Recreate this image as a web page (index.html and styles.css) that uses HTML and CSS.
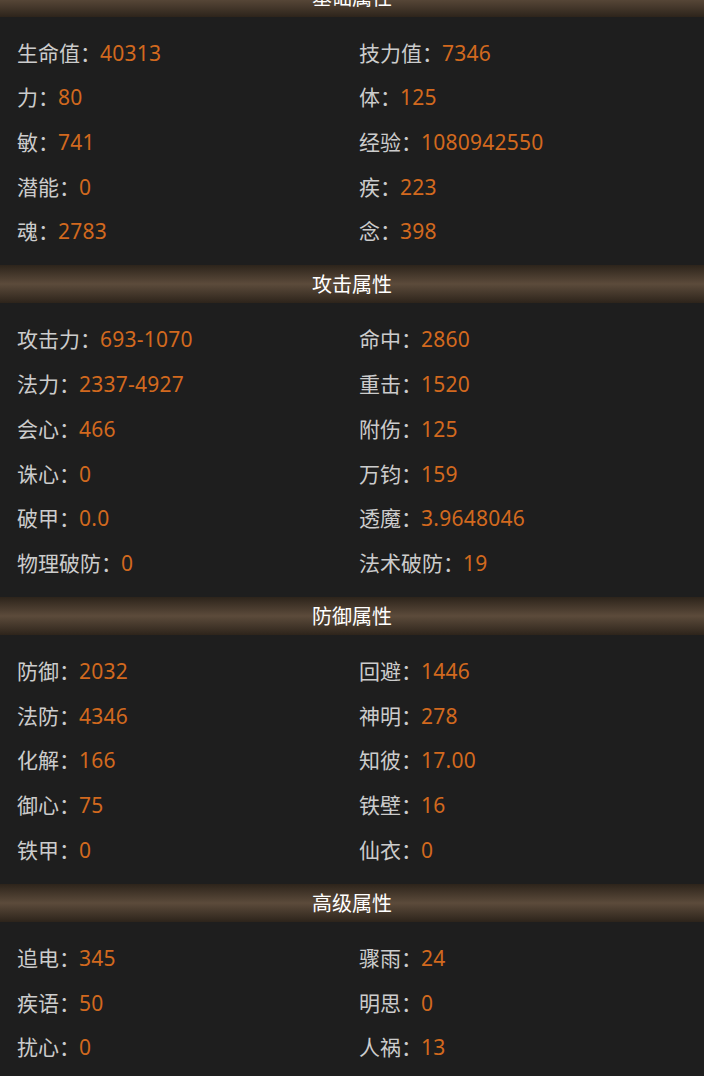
FILE: index.html
```html
<!DOCTYPE html>
<html>
<head>
    <meta charset="utf-8" />
    <title>属性</title>
    <link rel="stylesheet" href="styles.css">
</head>
<body>
    <div class="attrs">
        <div class="attr-title">基础属性</div>
        <ul class="attr-list">
            <li>生命值：<span>40313</span></li>
            <li>技力值：<span>7346</span></li>
            <li>力：<span>80</span></li>
            <li>体：<span>125</span></li>
            <li>敏：<span>741</span></li>
            <li>经验：<span>1080942550</span></li>
            <li>潜能：<span>0</span></li>
            <li>疾：<span>223</span></li>
            <li>魂：<span>2783</span></li>
            <li>念：<span>398</span></li>
        </ul>

        <div class="attr-title">攻击属性</div>
        <ul class="attr-list">
            <li>攻击力：<span>693-1070</span></li>
            <li>命中：<span>2860</span></li>
            <li>法力：<span>2337-4927</span></li>
            <li>重击：<span>1520</span></li>
            <li>会心：<span>466</span></li>
            <li>附伤：<span>125</span></li>
            <li>诛心：<span>0</span></li>
            <li>万钧：<span>159</span></li>
            <li>破甲：<span>0.0</span></li>
            <li>透魔：<span>3.9648046</span></li>
            <li>物理破防：<span>0</span></li>
            <li>法术破防：<span>19</span></li>
        </ul>

        <div class="attr-title">防御属性</div>
        <ul class="attr-list">
            <li>防御：<span>2032</span></li>
            <li>回避：<span>1446</span></li>
            <li>法防：<span>4346</span></li>
            <li>神明：<span>278</span></li>
            <li>化解：<span>166</span></li>
            <li>知彼：<span>17.00</span></li>
            <li>御心：<span>75</span></li>
            <li>铁壁：<span>16</span></li>
            <li>铁甲：<span>0</span></li>
            <li>仙衣：<span>0</span></li>
        </ul>

        <div class="attr-title">高级属性</div>
        <ul class="attr-list">
            <li>追电：<span>345</span></li>
            <li>骤雨：<span>24</span></li>
            <li>疾语：<span>50</span></li>
            <li>明思：<span>0</span></li>
            <li>扰心：<span>0</span></li>
            <li>人祸：<span>13</span></li>
        </ul>
    </div>
</body>
</html>
```

FILE: styles.css
```css
html, body { margin: 0; padding: 0; background-color: #1e1e1e; }
body { font-family: "Noto Sans", "Noto Sans CJK SC", sans-serif; font-size: 21px; color: #cccccc; overflow: hidden; }
.attrs { margin-top: -22px; }
.attr-title { height: 38.5px; line-height: 40.5px; overflow: hidden; text-align: center; color: #ffffff; font-size: 20px; background: linear-gradient(to bottom, #2d241b 0%, #5c4b3b 50%, #2d241b 100%); }
.attr-list { list-style: none; margin: 0; padding: 14px 10px 11px; display: grid; grid-template-columns: 1fr 1fr; grid-auto-rows: 44.7px; }
.attr-list li { padding: 0 7px; line-height: 44.7px; white-space: nowrap; }
.attr-list span { color: #d2691e; letter-spacing: 0.25px; margin-left: -1px; }
```
